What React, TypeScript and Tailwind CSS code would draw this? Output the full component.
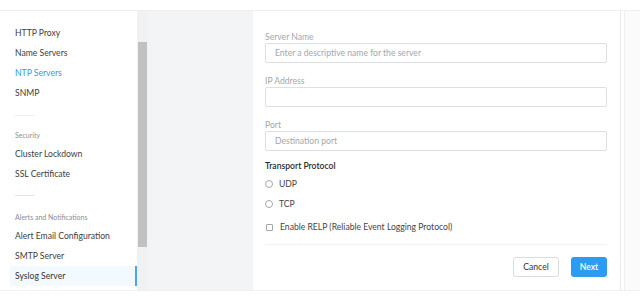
import React from "react";

const font = { fontFamily: "Lato, 'Open Sans', sans-serif" };

type NavItem = { label: string; active?: boolean; current?: boolean };

const network: NavItem[] = [
  { label: "HTTP Proxy" },
  { label: "Name Servers" },
  { label: "NTP Servers", active: true },
  { label: "SNMP" },
];

const security: NavItem[] = [{ label: "Cluster Lockdown" }, { label: "SSL Certificate" }];

const alerts: NavItem[] = [
  { label: "Alert Email Configuration" },
  { label: "SMTP Server" },
  { label: "Syslog Server", current: true },
];

const Item = ({ item }: { item: NavItem }) => (
  <div
    className={
      "h-[20px] leading-[20px] pl-[5px] text-[8.6px] " +
      (item.current
        ? "bg-[#f2f9ff] border-r-2 border-[#4aa6ee] text-[#333]"
        : item.active
        ? "text-[#2b9cf2]"
        : "text-[#3d3d3d]")
    }
  >
    {item.label}
  </div>
);

const Field = ({ label, placeholder }: { label: string; placeholder?: string }) => (
  <div className="flex flex-col">
    <div className="h-[12px] leading-[12px] text-[8.6px] text-[#a3a7ac]">{label}</div>
    <div className="h-[20px] border border-[#dcdfe3] rounded-[2px] px-[9px] text-[8.6px] leading-[18px] text-[#a3a7ac]">
      {placeholder}
    </div>
  </div>
);

const Radio = ({ label }: { label: string }) => (
  <div className="flex items-center h-[20px] gap-[6px]">
    <span className="w-[8px] h-[8px] rounded-full border border-[#a3a7ac]" />
    <span className="text-[8.6px] text-[#444]">{label}</span>
  </div>
);

export default function App() {
  return (
    <div className="w-[640px] h-[302px] bg-white flex flex-col overflow-hidden" style={font}>
      <div className="h-[11px] border-b border-[#eceef0] shrink-0" />
      <div className="flex h-[279px] shrink-0">
        <aside className="w-[137px] bg-white flex flex-col pl-[10px] pt-[12px]">
          {network.map((i) => (
            <Item key={i.label} item={i} />
          ))}
          <div className="h-[12px]" />
          <div className="ml-[5px] w-[20px] border-t border-[#f0f0f0]" />
          <div className="h-[18px] leading-[18px] mt-[10px] pl-[5px] text-[7px] text-[#8a8f95]">Security</div>
          {security.map((i) => (
            <Item key={i.label} item={i} />
          ))}
          <div className="ml-[5px] mt-[11px] w-[20px] border-t border-[#e6e6e6]" />
          <div className="h-[18px] leading-[18px] mt-[12px] pl-[5px] text-[7px] text-[#8a8f95]">
            Alerts and Notifications
          </div>
          {alerts.map((i) => (
            <Item key={i.label} item={i} />
          ))}
        </aside>
        <div className="w-[11px] bg-[#f1f1f1] pt-[31px] flex justify-center">
          <div className="w-[9px] h-[205px] bg-[#c1c1c1]" />
        </div>
        <div className="w-[105px] bg-[#f3f4f5]" />
        <main className="w-[368px] bg-white border-r border-[#e9ebed] pl-[12px] pr-[13px] pt-[20px] flex flex-col">
          <Field label="Server Name" placeholder="Enter a descriptive name for the server" />
          <div className="h-[12px]" />
          <Field label="IP Address" />
          <div className="h-[12px]" />
          <Field label="Port" placeholder="Destination port" />
          <div className="mt-[9px] h-[12px] leading-[12px] text-[8.6px] font-semibold text-[#2a2a2a]">
            Transport Protocol
          </div>
          <div className="mt-[2px] flex flex-col">
            <Radio label="UDP" />
            <Radio label="TCP" />
          </div>
          <div className="flex items-center h-[20px] gap-[7px] mt-[3px] pl-[1px]">
            <span className="w-[7px] h-[7px] rounded-[1px] border border-[#a3a7ac]" />
            <span className="text-[8.6px] text-[#444]">Enable RELP (Reliable Event Logging Protocol)</span>
          </div>
          <div className="mt-[7px] border-t border-[#f0f1f2]" />
          <div className="mt-[12px] flex justify-end gap-[12px]">
            <button className="h-[20px] w-[46px] border border-[#d9dcdf] rounded-[3px] bg-white text-[8.6px] text-[#333]">
              Cancel
            </button>
            <button className="h-[20px] w-[36px] rounded-[3px] bg-[#2b9cf2] text-[8.6px] font-semibold text-white">
              Next
            </button>
          </div>
        </main>
        <div className="w-[3px] bg-white" />
        <div className="flex-1 bg-[#fbfbfc] border-l border-[#eeeff0]" />
      </div>
      <div className="flex-1 border-t border-[#eeeff0]" />
    </div>
  );
}
